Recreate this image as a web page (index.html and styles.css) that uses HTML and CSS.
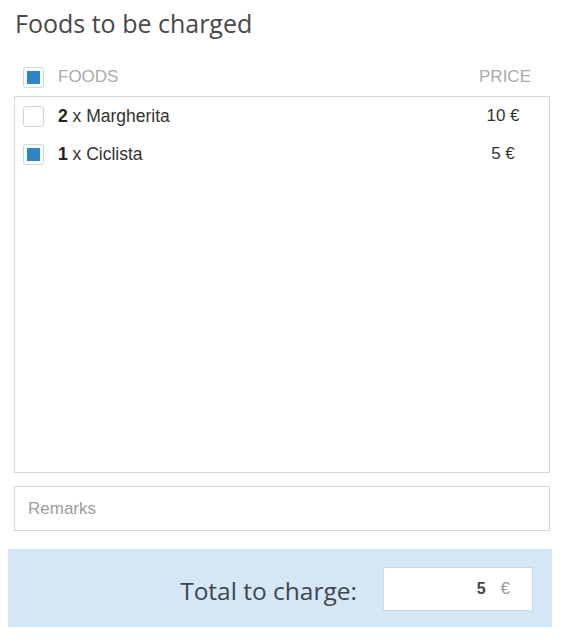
FILE: index.html
```html
<!DOCTYPE html>
<html>
<head>
<meta charset="utf-8">
<link rel="stylesheet" href="styles.css">
</head>
<body>
<div class="panel">
  <h1 class="title">Foods to be charged</h1>
  <div class="head">
    <span class="cb checked"></span>
    <span class="head-label">FOODS</span>
    <span class="head-price">PRICE</span>
  </div>
  <div class="list">
    <div class="row">
      <span class="cb"></span>
      <span class="name"><b>2</b> x Margherita</span>
      <span class="price">10 €</span>
    </div>
    <div class="row">
      <span class="cb checked"></span>
      <span class="name"><b>1</b> x Ciclista</span>
      <span class="price">5 €</span>
    </div>
  </div>
  <div class="remarks">Remarks</div>
  <div class="total">
    <span class="total-label">Total to charge:</span>
    <div class="total-box"><b>5</b><span class="cur">€</span></div>
  </div>
</div>
</body>
</html>
```
FILE: styles.css
```css
html, body { background: #fff; }
body {
  margin: 8px;
  font-family: "Liberation Sans", Arial, sans-serif;
}
.panel {
  width: 544px;
  display: flex;
  flex-direction: column;
}
.title {
  margin: 0 0 0 7px;
  font-family: "Open Sans", sans-serif;
  font-weight: 400;
  font-size: 25px;
  line-height: 30px;
  color: #484848;
}
.head {
  margin-top: 24px;
  height: 30px;
  display: flex;
  align-items: center;
  padding-left: 15px;
  font-size: 17px;
  color: #aaa;
}
.head-label { margin-left: 14px; flex: 1; }
.head-price { margin-right: 21px; }
.cb {
  box-sizing: border-box;
  width: 21px;
  height: 21px;
  border: 1px solid #d4d4d4;
  border-radius: 3px;
  background: #fff;
  padding: 3px;
  display: flex;
}
.cb.checked { border-color: #c6d9e8; }
.cb.checked::before {
  content: "";
  flex: 1;
  background: #2b86c3;
}
.list {
  margin: 4px 2px 0 6px;
  box-sizing: border-box;
  height: 377px;
  border: 1px solid #d6d6d6;
}
.row {
  height: 38px;
  display: flex;
  align-items: center;
  padding-left: 8px;
  font-size: 17.5px;
  color: #333;
}
.name { margin-left: 14px; flex: 1; }
.name b { color: #222; }
.price { width: 60px; text-align: center; margin-right: 16px; font-size: 17px; }
.remarks {
  margin: 13px 2px 0 6px;
  box-sizing: border-box;
  height: 45px;
  border: 1px solid #d6d6d6;
  display: flex;
  align-items: center;
  padding-left: 13px;
  font-size: 17px;
  color: #9c9c9c;
}
.total {
  margin-top: 18px;
  height: 78px;
  background: #d5e7f5;
  display: flex;
  align-items: center;
  justify-content: flex-end;
  padding-right: 19px;
}
.total-label {
  font-family: "Open Sans", sans-serif;
  font-size: 24.5px;
  color: #3e4650;
  margin-right: 26px;
  margin-top: 4px;
}
.total-box {
  box-sizing: border-box;
  width: 150px;
  height: 44px;
  background: #fff;
  border: 1px solid #cfd8de;
  display: flex;
  align-items: center;
  justify-content: flex-end;
  padding-right: 22px;
  font-size: 16px;
  color: #444;
  margin-top: 2px;
}
.cur { margin-left: 15px; color: #999; font-size: 17px; }
```
